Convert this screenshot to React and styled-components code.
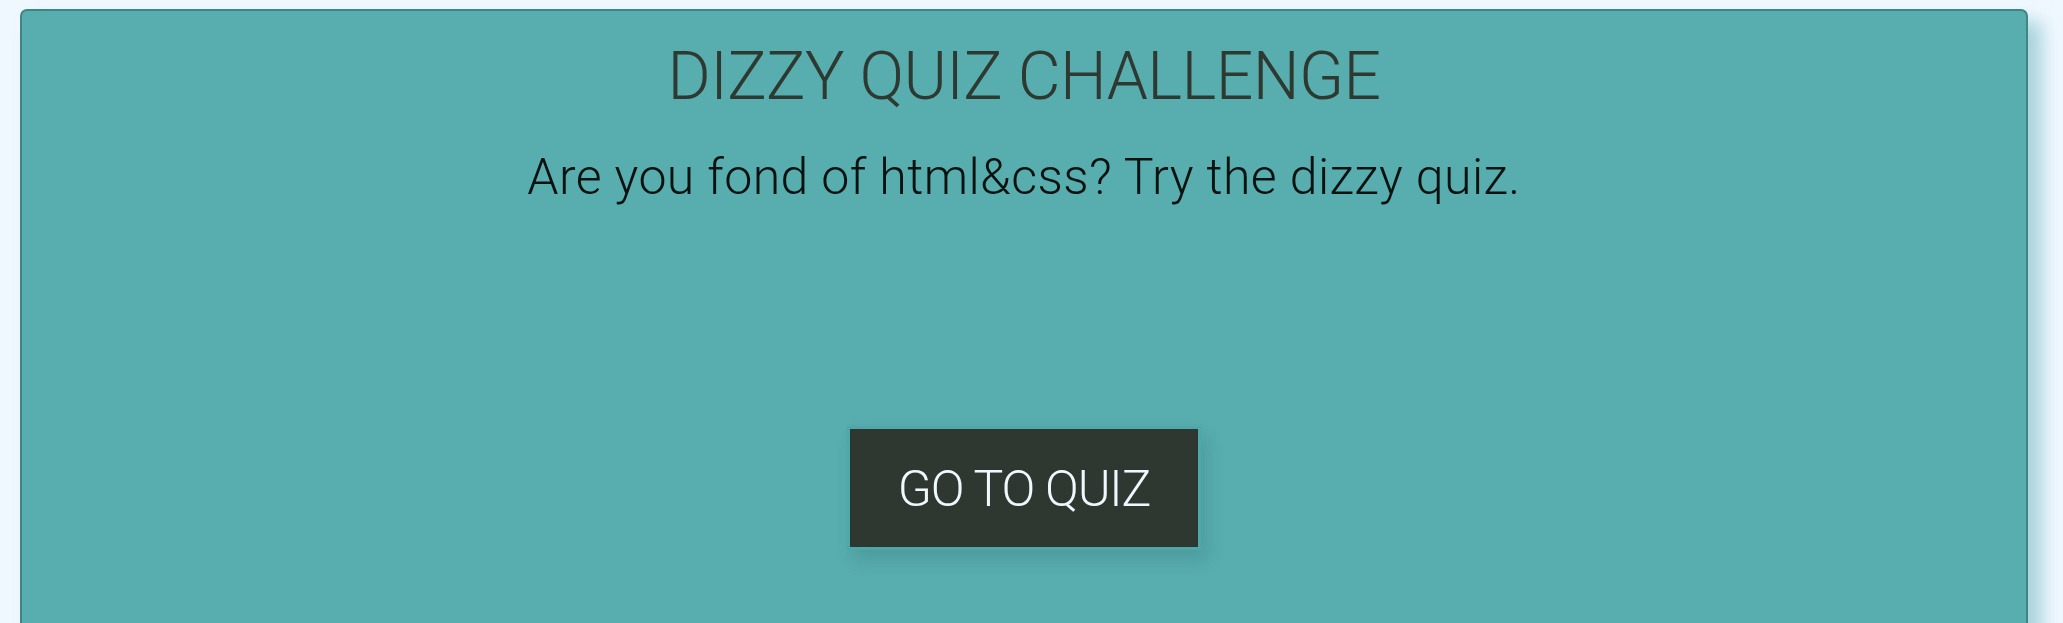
import React from "react";
import styled, { createGlobalStyle } from "styled-components";

const Global = createGlobalStyle`
  html, body {
    margin: 0;
    padding: 0;
    background: #f0f8ff;
    font-family: Roboto, "Liberation Sans", sans-serif;
  }
`;

const Page = styled.main`
  padding: 9px 35px 0 20px;
  min-height: 623px;
  box-sizing: border-box;
  overflow: hidden;
`;

const Card = styled.section`
  background: #58adaf;
  border: 2px solid #3f8581;
  border-radius: 7px;
  box-shadow: 14px 12px 18px rgba(110, 180, 190, 0.55);
  min-height: 700px;
  display: flex;
  flex-direction: column;
  align-items: center;
  padding-top: 26px;
  box-sizing: border-box;
`;

const Title = styled.h1`
  margin: 0;
  font-family: Roboto, "Liberation Sans", sans-serif;
  font-weight: 300;
  font-size: 66px;
  line-height: 80px;
  color: #2e3a31;
  letter-spacing: -0.6px;
`;

const Lead = styled.p`
  margin: 30px 0 0;
  font-family: Roboto, "Liberation Sans", sans-serif;
  font-weight: 300;
  font-size: 50px;
  line-height: 60px;
  color: #0a1210;
  letter-spacing: 0.4px;
`;

const QuizButton = styled.button`
  margin-top: 219px;
  width: 354px;
  height: 124px;
  background: #2f3830;
  border: 3px solid #4ea8aa;
  box-shadow: 6px 10px 16px rgba(30, 80, 80, 0.18);
  color: #f0f8ff;
  font-family: Roboto, "Liberation Sans", sans-serif;
  font-weight: 300;
  font-size: 50px;
  line-height: 60px;
  letter-spacing: -1.2px;
  cursor: pointer;
  box-sizing: border-box;
  padding: 2px 0 0;
`;

export default function App() {
  return (
    <>
      <Global />
      <Page>
        <Card>
          <Title>DIZZY QUIZ CHALLENGE</Title>
          <Lead>Are you fond of html&amp;css? Try the dizzy quiz.</Lead>
          <QuizButton>GO TO QUIZ</QuizButton>
        </Card>
      </Page>
    </>
  );
}
